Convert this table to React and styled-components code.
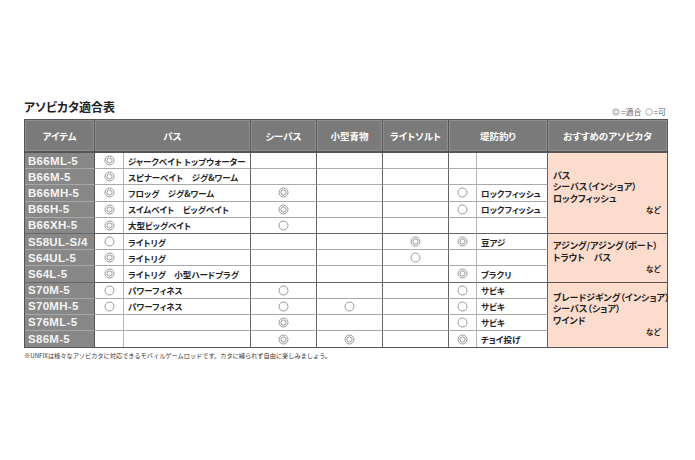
import React from 'react';
import styled, { createGlobalStyle } from 'styled-components';

const GlobalStyle = createGlobalStyle`
  body {
    margin: 0;
    background: #fff;
    font-family: "Noto Sans CJK JP", "Noto Sans", sans-serif;
  }
`;

const JP = `"Noto Sans CJK JP", "Noto Sans", sans-serif`;

const rows = [
  { code: 'B66ML-5', bass: 'D', bassText: 'ジャークベイト トップウォーター' },
  { code: 'B66M-5', bass: 'D', bassText: 'スピナーベイト　ジグ&ワーム' },
  { code: 'B66MH-5', bass: 'D', bassText: 'フロッグ　ジグ&ワーム', sea: 'D', pier: 'S', pierText: 'ロックフィッシュ' },
  { code: 'B66H-5', bass: 'D', bassText: 'スイムベイト　ビッグベイト', sea: 'D', pier: 'S', pierText: 'ロックフィッシュ' },
  { code: 'B66XH-5', bass: 'D', bassText: '大型ビッグベイト', sea: 'S', groupEnd: true },
  { code: 'S58UL-S/4', bass: 'S', bassText: 'ライトリグ', light: 'D', pier: 'D', pierText: '豆アジ' },
  { code: 'S64UL-5', bass: 'D', bassText: 'ライトリグ', light: 'S' },
  { code: 'S64L-5', bass: 'D', bassText: 'ライトリグ　小型ハードプラグ', pier: 'D', pierText: 'ブラクリ', groupEnd: true },
  { code: 'S70M-5', bass: 'S', bassText: 'パワーフィネス', sea: 'S', pier: 'S', pierText: 'サビキ' },
  { code: 'S70MH-5', bass: 'S', bassText: 'パワーフィネス', sea: 'S', small: 'S', pier: 'S', pierText: 'サビキ' },
  { code: 'S76ML-5', sea: 'D', pier: 'S', pierText: 'サビキ' },
  { code: 'S86M-5', sea: 'D', small: 'D', pier: 'D', pierText: 'チョイ投げ', last: true },
];

const groups = {
  0: { span: 5, lines: ['バス', 'シーバス（インショア）', 'ロックフィッシュ'] },
  5: { span: 3, lines: ['アジング/アジング（ボート）', 'トラウト　バス'] },
  8: { span: 4, lines: ['ブレードジギング（インショア）', 'シーバス（ショア）', 'ワインド'] },
};

const Mark = ({ type, size = 11 }) => {
  if (!type) return null;
  return (
    <svg width={size} height={size} viewBox="0 0 11 11">
      <circle cx="5.5" cy="5.5" r="4.5" fill="#fff" stroke="#8c8c8c" strokeWidth="0.9" />
      {type === 'D' && <circle cx="5.5" cy="5.5" r="2.6" fill="none" stroke="#8c8c8c" strokeWidth="0.9" />}
    </svg>
  );
};

const App = () => (
  <>
    <GlobalStyle />
    <Page>
      <TitleRow>
        <Title>アソビカタ適合表</Title>
        <Legend>
          <Mark type="D" size={8} />
          <span>=適合</span>
          <Mark type="S" size={8} />
          <span>=可</span>
        </Legend>
      </TitleRow>

      <Grid>
        <HeadCell>アイテム</HeadCell>
        <HeadCell $span={2}>バス</HeadCell>
        <HeadCell>シーバス</HeadCell>
        <HeadCell>小型青物</HeadCell>
        <HeadCell>ライトソルト</HeadCell>
        <HeadCell $span={2}>堤防釣り</HeadCell>
        <HeadCell $lastCol>おすすめのアソビカタ</HeadCell>

        {rows.map((r, i) => (
          <React.Fragment key={r.code}>
            <ItemCell $groupEnd={r.groupEnd} $last={r.last}>{r.code}</ItemCell>
            <MarkCell $sub $groupEnd={r.groupEnd} $last={r.last}><Mark type={r.bass} /></MarkCell>
            <TextCell $groupEnd={r.groupEnd} $last={r.last}>{r.bassText}</TextCell>
            <MarkCell $groupEnd={r.groupEnd} $last={r.last}><Mark type={r.sea} /></MarkCell>
            <MarkCell $groupEnd={r.groupEnd} $last={r.last}><Mark type={r.small} /></MarkCell>
            <MarkCell $groupEnd={r.groupEnd} $last={r.last}><Mark type={r.light} /></MarkCell>
            <MarkCell $sub $groupEnd={r.groupEnd} $last={r.last}><Mark type={r.pier} /></MarkCell>
            <TextCell $groupEnd={r.groupEnd} $last={r.last}>{r.pierText}</TextCell>
            {groups[i] && (
              <RecCell $span={groups[i].span} $last={i === 8}>
                {groups[i].lines.map((l) => (
                  <RecLine key={l}>{l}</RecLine>
                ))}
                <RecEtc>など</RecEtc>
              </RecCell>
            )}
          </React.Fragment>
        ))}
      </Grid>

      <Note>※UNFIXは様々なアソビカタに対応できるモバイルゲームロッドです。カタに縛られず自由に楽しみましょう。</Note>
    </Page>
  </>
);

const Page = styled.div`
  width: 644px;
  padding: 100px 0 0 24px;
`;

const TitleRow = styled.div`
  display: flex;
  justify-content: space-between;
  align-items: flex-end;
  height: 14px;
  margin-bottom: 5px;
`;

const Title = styled.h2`
  margin: 0;
  font: 700 12px/14px ${JP};
  color: #222;
  font-feature-settings: "palt";
`;

const Legend = styled.div`
  display: flex;
  align-items: center;
  gap: 1px;
  font: 400 8px/10px ${JP};
  color: #666;
  margin-bottom: -3px;
  span {
    margin-right: 2px;
  }
`;

const Grid = styled.div`
  display: grid;
  grid-template-columns: 70px 29px 127px 66px 66px 66px 28px 71px 119px;
  grid-template-rows: 33px repeat(12, 16.2px);
  border: 1px solid #555;
`;

const HeadCell = styled.div`
  grid-column: span ${({ $span }) => $span || 1};
  display: flex;
  align-items: center;
  justify-content: center;
  background: #7a7a7a;
  box-shadow: inset 0 0 0 1px #8f8f8f;
  border-right: ${({ $lastCol }) => ($lastCol ? 'none' : '1px solid #555')};
  border-bottom: 2px solid #555;
  color: #fff;
  font: 700 9.5px ${JP};
  font-feature-settings: "palt";
`;

const rowLine = ({ $groupEnd, $last }) =>
  $last ? 'none' : `1px solid ${$groupEnd ? '#666' : '#aaa'}`;

const ItemCell = styled.div`
  display: flex;
  align-items: center;
  padding-left: 3px;
  background: #888;
  color: #f4f4f4;
  font: 700 11.5px "Liberation Sans", Arial, sans-serif;
  letter-spacing: 0.3px;
  border-right: 1px solid #555;
  border-bottom: ${({ $groupEnd, $last }) => ($last ? 'none' : `1px solid ${$groupEnd ? '#666' : '#a8a8a8'}`)};
`;

const MarkCell = styled.div`
  display: flex;
  align-items: center;
  justify-content: center;
  border-right: 1px solid ${({ $sub }) => ($sub ? '#b5b5b5' : '#666')};
  border-bottom: ${rowLine};
`;

const TextCell = styled.div`
  display: flex;
  align-items: center;
  padding-left: 4px;
  overflow: hidden;
  white-space: nowrap;
  color: #222;
  font: 700 8.5px ${JP};
  font-feature-settings: "palt";
  border-right: 1px solid #666;
  border-bottom: ${rowLine};
`;

const RecCell = styled.div`
  grid-row: span ${({ $span }) => $span};
  display: flex;
  flex-direction: column;
  justify-content: center;
  padding: 0 6px 0 5px;
  background: #fbdccd;
  border-bottom: ${({ $last }) => ($last ? 'none' : '1px solid #555')};
`;

const RecLine = styled.div`
  font: 700 9px/11.5px ${JP};
  color: #222;
  font-feature-settings: "palt";
  white-space: nowrap;
`;

const RecEtc = styled.div`
  align-self: flex-end;
  font: 700 7.5px/11.5px ${JP};
  color: #222;
`;

const Note = styled.div`
  margin-top: 4px;
  font: 400 6.2px/8px ${JP};
  color: #333;
  white-space: nowrap;
`;

export default App;
